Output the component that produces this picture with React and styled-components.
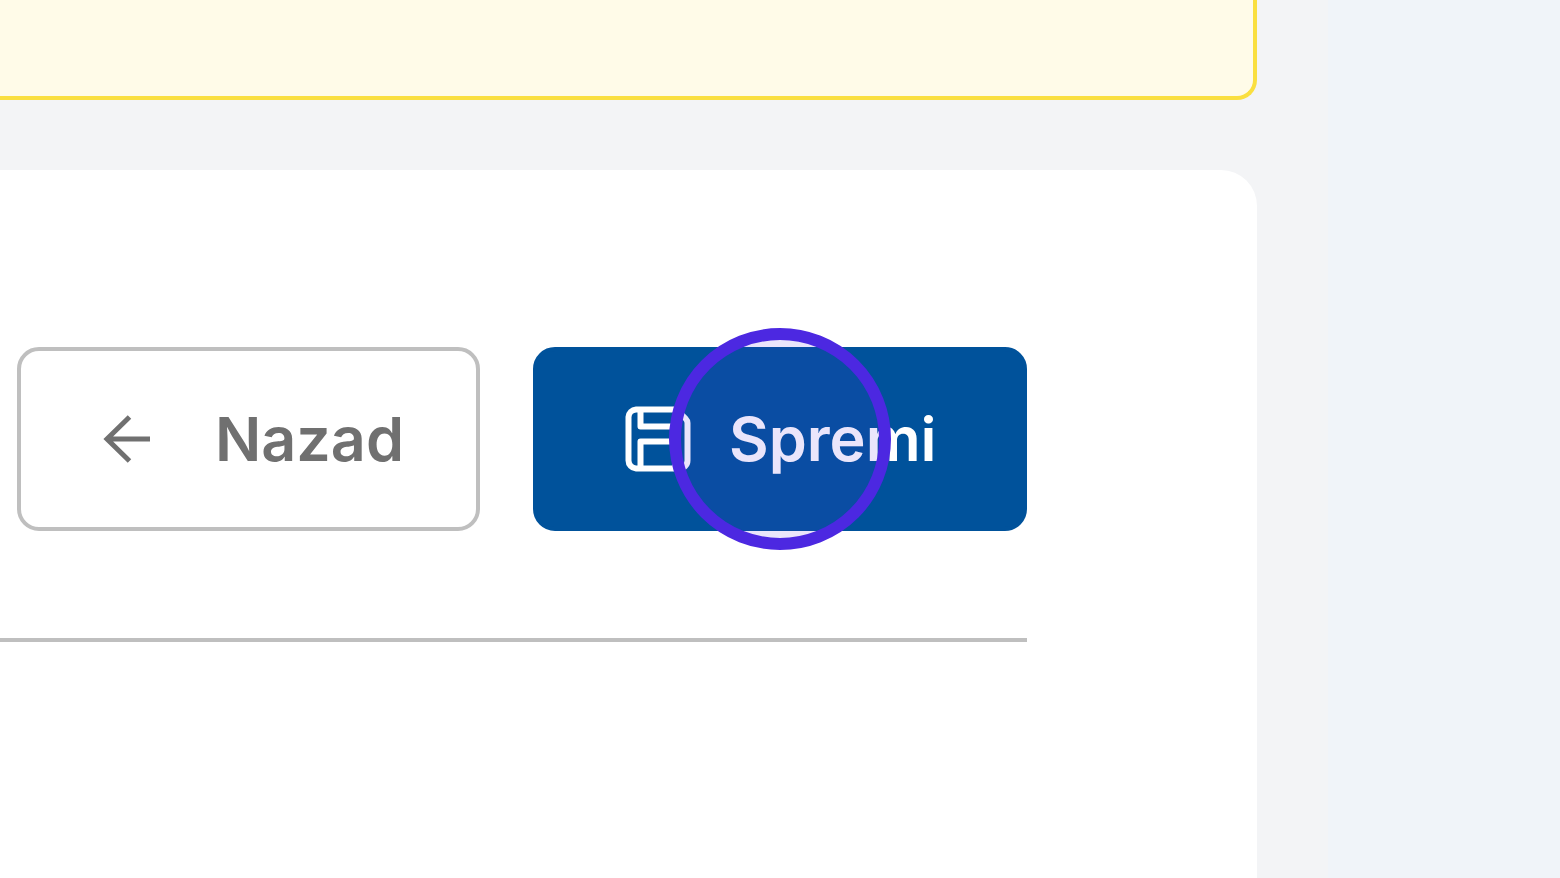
import React from "react";
import styled, { createGlobalStyle, css } from "styled-components";

const GlobalStyle = createGlobalStyle`
  *, *::before, *::after { box-sizing: border-box; }
  body {
    margin: 0;
    background: #f0f4f9;
    font-family: Inter, "Liberation Sans", sans-serif;
  }
`;

const Page = styled.div`
  display: flex;
  min-height: 100vh;
  padding-right: 232px;
  overflow: hidden;
`;

const Content = styled.main`
  flex: 1;
  display: flex;
  flex-direction: column;
  gap: 70px;
  padding-right: 71px;
  background: #f3f4f6;
`;

const Notice = styled.aside`
  height: 100px;
  border: solid #fadf40;
  border-width: 0 4px 4px 0;
  border-bottom-right-radius: 20px;
  background: #fffbe8;
`;

const Card = styled.section`
  flex: 1;
  padding: 177px 230px 0 0;
  border-top-right-radius: 36px;
  background: #ffffff;
`;

const Toolbar = styled.header`
  display: flex;
  justify-content: flex-end;
  gap: 53px;
  padding-bottom: 107px;
  border-bottom: 4px solid #bfbfbf;
`;

const Button = styled.button`
  position: relative;
  display: flex;
  align-items: center;
  height: 184px;
  border: 4px solid #bfbfbf;
  border-radius: 22px;
  background: #ffffff;
  color: #707070;
  font: 600 61px/72px Inter, "Liberation Sans", sans-serif;
  white-space: nowrap;
  width: 463px;
  gap: 64px;
  padding: 0 0 0 82px;

  ${({ $primary }) =>
    $primary &&
    css`
      width: 494px;
      gap: 38px;
      padding-left: 88px;
      border-color: #00529b;
      background: #00529b;
      color: #ffffff;
    `}
`;

const Icon = styled.svg`
  flex: none;
  fill: none;
  stroke: currentColor;
`;

const ClickRing = styled.span`
  position: absolute;
  top: 50%;
  left: 50%;
  width: 222px;
  height: 222px;
  border: 12px solid #4c28e1;
  border-radius: 50%;
  background: rgba(79, 38, 226, 0.12);
  transform: translate(-50%, -50%);
  pointer-events: none;
`;

function BackIcon() {
  return (
    <Icon width="48" height="48" viewBox="0 0 48 48" strokeWidth="5" aria-hidden="true">
      <path d="M47 24H4M26.500 2L4 24L26.500 46" />
    </Icon>
  );
}

function SaveIcon() {
  return (
    <Icon width="66" height="66" viewBox="0 0 66 66" strokeWidth="6" strokeLinejoin="round" aria-hidden="true">
      <path d="M11 3.500H49C51 3.500 52 4 53.500 5.500L60.500 12.500C62 14 62.500 15 62.500 17V54.500A8 8 0 0 1 54.500 62.500H11A8 8 0 0 1 3.500 54.500V11A8 8 0 0 1 11 3.500Z" />
      <path d="M15.500 3.500V20.500H48M15.500 62.500V35.500H50V62.500" />
    </Icon>
  );
}

export default function App() {
  return (
    <>
      <GlobalStyle />
      <Page>
        <Content>
          <Notice />
          <Card>
            <Toolbar>
              <Button type="button">
                <BackIcon />
                Nazad
              </Button>
              <Button type="button" $primary>
                <SaveIcon />
                Spremi
                <ClickRing />
              </Button>
            </Toolbar>
          </Card>
        </Content>
      </Page>
    </>
  );
}
